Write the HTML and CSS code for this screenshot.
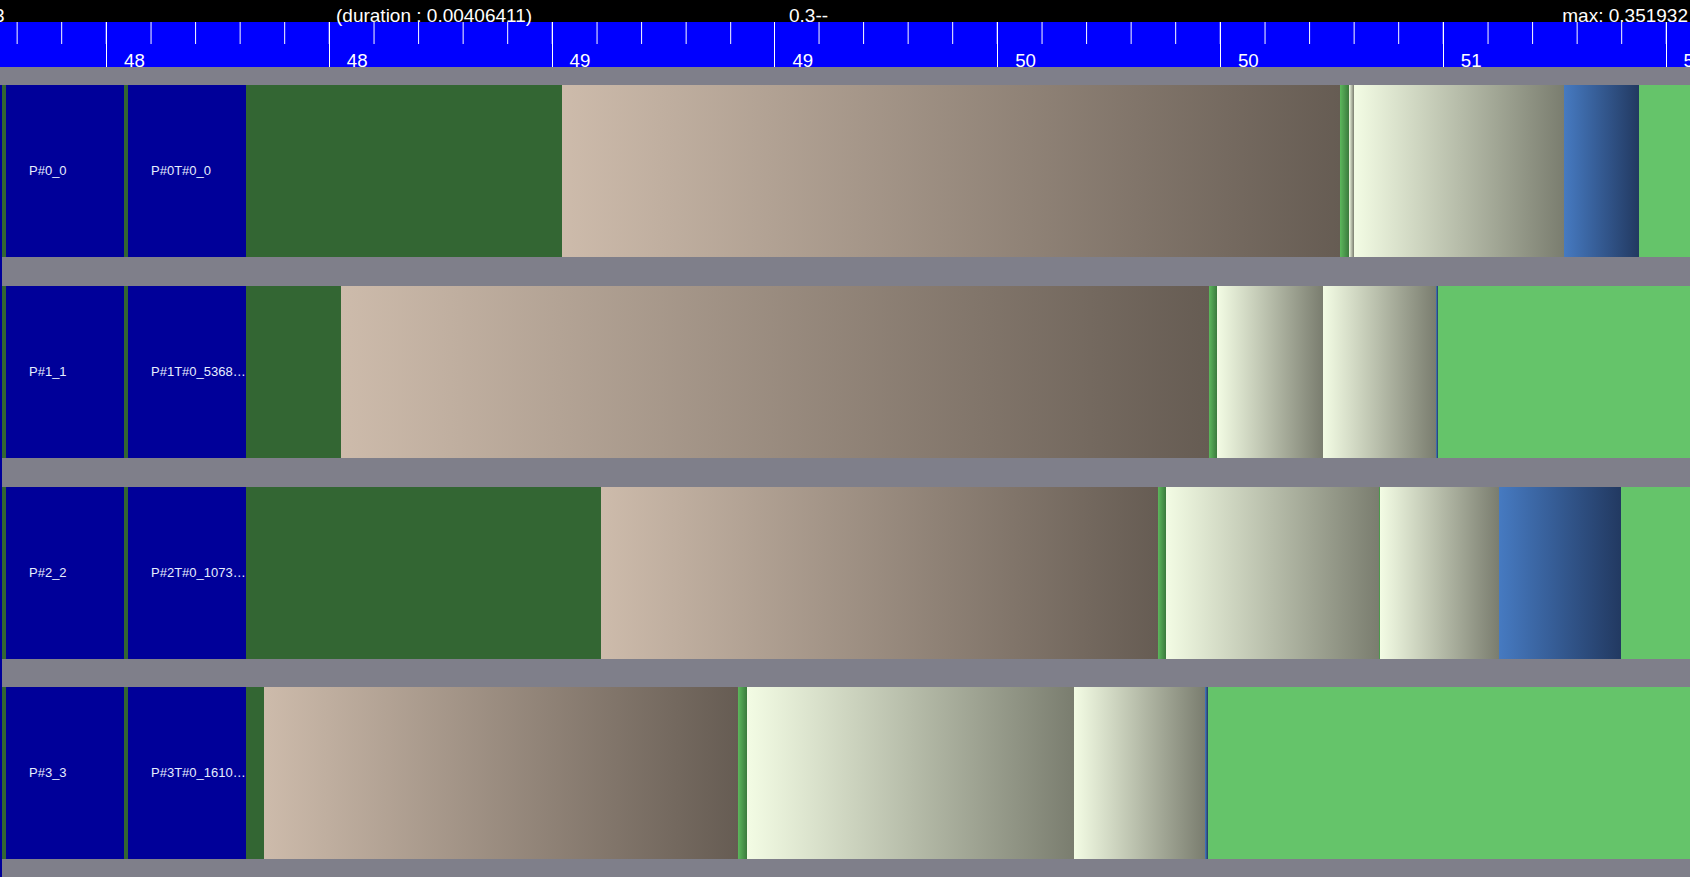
FILE: index.html
```html
<!DOCTYPE html>
<html>
  <head>
    <title>Trace timeline</title>
    <link rel="stylesheet" href="styles.css">
  </head>
  <body>
    <div class="header">
      <span class="min">3</span>
      <span>(duration : 0.00406411)</span>
      <span>0.3--</span>
      <span class="max">max: 0.351932</span>
    </div>

    <div class="ruler">
      <div class="step"><span>47</span></div>
      <div class="step"><span>48</span></div>
      <div class="step"><span>48</span></div>
      <div class="step"><span>49</span></div>
      <div class="step"><span>49</span></div>
      <div class="step"><span>50</span></div>
      <div class="step"><span>50</span></div>
      <div class="step"><span>51</span></div>
      <div class="step"><span>51</span></div>
    </div>

    <div class="lanes">
      <div class="track">
        <div class="edge"></div>
        <div class="rows">
          <div class="row">
            <div class="cell">P#0_0</div>
            <div class="cell">P#0T#0_0</div>
            <div class="seg wait" style="width:316px"></div>
            <div class="seg run" style="width:778px"></div>
            <div class="seg lock" style="width:9px"></div>
            <div class="seg read" style="width:5px"></div>
            <div class="seg read" style="width:210px"></div>
            <div class="seg send" style="width:75px"></div>
            <div class="seg idle"></div>
          </div>

          <div class="row">
            <div class="cell">P#1_1</div>
            <div class="cell">P#1T#0_536870912</div>
            <div class="seg wait" style="width:95px"></div>
            <div class="seg run" style="width:868px"></div>
            <div class="seg lock" style="width:8px"></div>
            <div class="seg read" style="width:106px"></div>
            <div class="seg read" style="width:113px"></div>
            <div class="seg send" style="width:2px"></div>
            <div class="seg idle"></div>
          </div>

          <div class="row">
            <div class="cell">P#2_2</div>
            <div class="cell">P#2T#0_1073741824</div>
            <div class="seg wait" style="width:355px"></div>
            <div class="seg run" style="width:557px"></div>
            <div class="seg lock" style="width:8px"></div>
            <div class="seg read" style="width:213px"></div>
            <div class="seg lock" style="width:1px"></div>
            <div class="seg read" style="width:119px"></div>
            <div class="seg send" style="width:122px"></div>
            <div class="seg idle"></div>
          </div>

          <div class="row">
            <div class="cell">P#3_3</div>
            <div class="cell">P#3T#0_1610612736</div>
            <div class="seg wait" style="width:18px"></div>
            <div class="seg run" style="width:474px"></div>
            <div class="seg lock" style="width:9px"></div>
            <div class="seg read" style="width:327px"></div>
            <div class="seg read" style="width:131px"></div>
            <div class="seg send" style="width:3px"></div>
            <div class="seg idle"></div>
          </div>
        </div>
      </div>
    </div>
  </body>
</html>
```

FILE: styles.css
```css
body {
  margin: 0;
  height: 100vh;
  display: flex;
  flex-direction: column;
  overflow: hidden;
  background: #000;
  font-family: "Liberation Sans", Arial, sans-serif;
}

.header {
  position: relative;
  z-index: 1;
  height: 22px;
  flex: none;
  display: grid;
  grid-template-columns: 336px 453px 1fr auto;
  grid-template-rows: 22px;
  font-size: 19px;
  line-height: 31px;
  color: #fff;
  white-space: nowrap;
}

.header .min {
  margin-left: -6px;
}

.header .max {
  padding-right: 2px;
}

.ruler {
  height: 45px;
  flex: none;
  display: flex;
  margin-left: -116.8px;
  overflow: hidden;
  background: #00f;
}

.step {
  flex: none;
  width: 222.8px;
  box-sizing: border-box;
  border-left: 1px solid #fff;
  display: flex;
  align-items: flex-end;
  background-image: linear-gradient(to right, #fff 1px, transparent 1px);
  background-size: 44.56px 22px;
  background-repeat: repeat-x;
  background-origin: border-box;
}

.step > span {
  padding-left: 17px;
  margin-bottom: -4px;
  font-size: 18.67px;
  line-height: 1;
  color: #fff;
}

.lanes {
  flex: 1;
  display: flex;
  flex-direction: column;
  padding-top: 18px;
  background: #7f7f8a;
}

.track {
  flex: 1;
  display: flex;
}

.edge {
  width: 2px;
  background: #000099;
}

.rows {
  flex: 1;
  display: flex;
  flex-direction: column;
  gap: 28.8px;
}

.row {
  flex: none;
  height: 172px;
  display: flex;
  background: #336633;
}

.cell {
  flex: none;
  width: 118px;
  margin-left: 4px;
  padding-left: 23px;
  box-sizing: border-box;
  background: #000099;
  color: #e6eeff;
  font-size: 13px;
  line-height: 172px;
  white-space: nowrap;
  overflow: hidden;
  text-overflow: ellipsis;
}

.seg {
  flex: none;
}

.wait {
  background: #336633;
}

.run {
  background: linear-gradient(to right, #cdbbab, #665c53);
}

.lock {
  background: linear-gradient(to right, #5cb85c, #3b7a3d);
}

.read {
  background: linear-gradient(to right, #f3fce4, #7a7d6f);
}

.send {
  background: linear-gradient(to right, #467ac1, #223961);
}

.idle {
  flex: 1;
  background: #65c46a;
}
```
